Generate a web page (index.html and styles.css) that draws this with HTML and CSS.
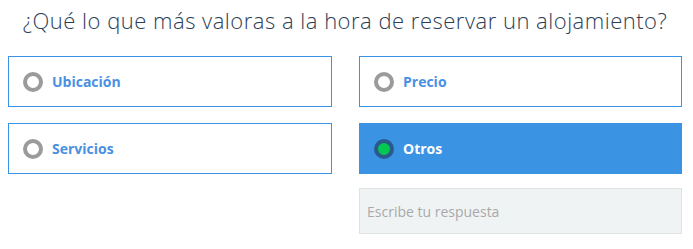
FILE: index.html
```html
<!DOCTYPE html>
<html lang="es">
<head>
<meta charset="utf-8">
<link rel="stylesheet" href="styles.css">
</head>
<body>
<div class="survey">
  <h1 class="question">¿Qué lo que más valoras a la hora de reservar un alojamiento?</h1>
  <div class="options">
    <label class="option"><span class="radio"></span><span class="label">Ubicación</span></label>
    <label class="option"><span class="radio"></span><span class="label">Precio</span></label>
    <label class="option"><span class="radio"></span><span class="label">Servicios</span></label>
    <label class="option selected"><span class="radio"></span><span class="label">Otros</span></label>
    <div class="spacer"></div>
    <input class="answer" type="text" placeholder="Escribe tu respuesta">
  </div>
</div>
</body>
</html>
```
FILE: styles.css
```css
* { box-sizing: border-box; }
html, body { margin: 0; padding: 0; background: #fff; }
.survey {
  width: 693px;
  padding: 0 11px 0 8px;
}
.question {
  margin: 0;
  height: 56px;
  padding-top: 6px;
  text-align: center;
  font-family: "Open Sans", sans-serif;
  font-weight: 300;
  font-size: 22px;
  letter-spacing: 0.5px;
  line-height: 28px;
  color: #2b3e56;
}
.options {
  display: grid;
  grid-template-columns: 324px 323px;
  column-gap: 27px;
  row-gap: 16px;
}
.option {
  display: flex;
  align-items: center;
  height: 51px;
  border: 1px solid #3a93e3;
  padding-left: 14px;
  font-family: "Open Sans", sans-serif;
  font-weight: 700;
  font-size: 14px;
  color: #4a90e2;
}
.radio {
  width: 20px;
  height: 20px;
  border-radius: 50%;
  border: 4px solid #9b9b9b;
  background: #fff;
  margin-right: 9px;
}
.option.selected {
  background: #3a93e3;
  color: #fff;
}
.option.selected .radio {
  border-color: #2a5a8c;
  background: #00c851;
}
.answer {
  margin-top: -2px;
  height: 46px;
  border: 1px solid #dfe3e6;
  background: #f0f3f4;
  padding: 0 7px;
  font-family: "Open Sans", sans-serif;
  font-size: 14px;
  color: #555;
  outline: none;
}
.answer::placeholder { color: #a9a9a9; }
```
